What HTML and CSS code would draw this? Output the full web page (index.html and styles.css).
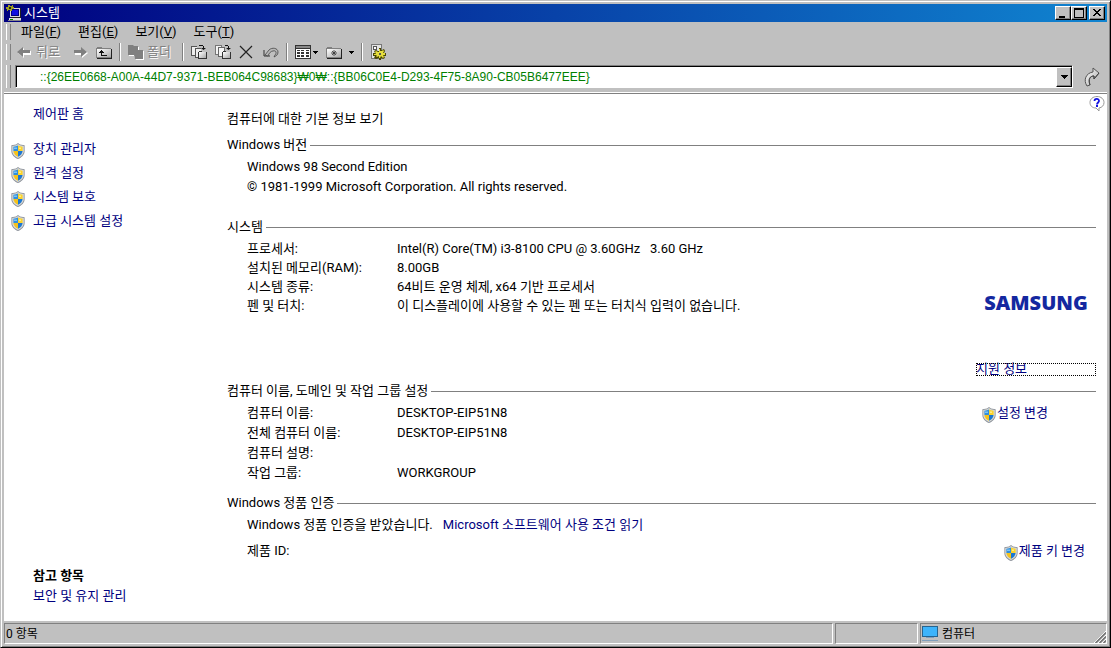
FILE: index.html
```html
<!DOCTYPE html>
<html lang="ko">
<head>
<meta charset="utf-8">
<title>시스템</title>
<link rel="stylesheet" href="styles.css">
</head>
<body>
<svg class="symbols" aria-hidden="true">
  <symbol id="shield" viewBox="0 0 14 16">
    <path d="M7 0 9 1.6 13.6 2.2V8C13.6 11.8 10.6 14.6 7 16 3.4 14.6.4 11.8.4 8V2.2L5 1.6Z" fill="#8a9099"/>
    <path d="M7 1 9 2.3 12.8 3V8C12.8 11.2 10.2 13.8 7 15 3.8 13.8 1.2 11.2 1.2 8V3L5 2.3Z" fill="#d8d9d6"/>
    <path d="M7 2.4V8H2.4V3.8L5 3.3Z" fill="#2f8fe0"/>
    <path d="M7 2.4V8H11.6V3.8L9 3.3Z" fill="#fbd32c"/>
    <path d="M7 8V13.8C4.5 12.7 2.6 10.6 2.4 8Z" fill="#f5c21c"/>
    <path d="M7 8V13.8C9.5 12.7 11.4 10.6 11.6 8Z" fill="#1b77d2"/>
    <path d="M3 4.5H6V6H3Z" fill="#7cc4f5"/><path d="M8 4.5H10V6H8Z" fill="#ffec85"/>
  </symbol>
  <linearGradient id="metal" x1="0" y1="0" x2="1" y2="1"><stop offset="0" stop-color="#fff"/><stop offset="1" stop-color="#a8a8a8"/></linearGradient>
</svg>
<div class="window">
  <header class="titlebar">
    <svg class="icon" viewBox="0 0 16 16" aria-hidden="true">
      <path d="M4 3h10v9H4z" fill="#d8d8d8"/><path d="M5 4h8v7H5z" fill="#000080"/><path d="M6 5h6v5H6z" fill="#1010e0"/>
      <path d="M5 12h9v1H5zM14 3h1v10h-1z" fill="#202020"/><path d="M3 13h12v2H3z" fill="#e0e0e0"/><path d="M2 15h13v1H2z" fill="#888"/><path d="M4 14h3v1H4z" fill="#008000"/>
      <path d="M2 0h2v1h2V0h1v2h1v2H6v2H4V5H2v1H1V4H0V2h2z" fill="#a0a020"/><path d="M3 2h2v2H3z" fill="#222"/>
    </svg>
    <h1>시스템</h1>
    <div class="controls">
      <button type="button" aria-label="최소화"><svg viewBox="0 0 12 10"><path d="M2 8h6v2H2z"/></svg></button>
      <button type="button" aria-label="최대화"><svg viewBox="0 0 12 10"><path fill-rule="evenodd" d="M1 0h10v10H1zM2 2v7h8V2z"/></svg></button>
      <button type="button" class="close" aria-label="닫기"><svg viewBox="0 0 12 10"><path d="M2 1h2v1h1v1h2V2h1V1h2v1H9v1H8v1H7v1h1v1h1v1h1v1H8V7H7V6H5v1H4v1H2V7h1V6h1V5h1V4H4V3H3V2H2z"/></svg></button>
    </div>
  </header>

  <nav class="bar menubar">
    <button type="button">파일(<u>F</u>)</button>
    <button type="button">편집(<u>E</u>)</button>
    <button type="button">보기(<u>V</u>)</button>
    <button type="button">도구(<u>T</u>)</button>
  </nav>

  <div class="bar toolbar">
    <button type="button" class="wide" disabled>
      <svg class="icon" viewBox="0 0 16 16"><path d="M1 9l6-5v3h7v4H7v3z" fill="#fff"/><path d="M0 8l6-5v3h7v3H6v4z" fill="#808080"/></svg><span>뒤로</span>
    </button>
    <button type="button" aria-label="앞으로" disabled>
      <svg class="icon" viewBox="0 0 16 16"><path d="M16 9l-6-5v3H3v4h7v3z" fill="#fff"/><path d="M15 8L9 3v3H2v3h7v4z" fill="#808080"/></svg>
    </button>
    <button type="button" aria-label="위로">
      <svg class="icon" viewBox="0 0 16 16"><path d="M0 4h1V3h5v1h9v10H0z" fill="#808080"/><path d="M1 5h14v8H1z" fill="url(#metal)"/><path d="M15 5h1v10H1v-1h14z" fill="#202020"/><path d="M5 6h1v1h1v1h1v1H6v2h5v1H5V9H3V8h1V7h1z" fill="#111"/></svg>
    </button>
    <span class="sep"></span>
    <button type="button" class="wide" disabled>
      <svg class="icon" viewBox="0 0 16 16"><path d="M1 2h5l1 1h4v4h5v9H8l-2-4H1z" fill="#fff"/><path d="M0 1h5l1 1h4v4h5v9H7l-1-4H0z" fill="#808080"/></svg><span>폴더</span>
    </button>
    <span class="sep"></span>
    <button type="button" aria-label="이동">
      <svg class="icon" viewBox="0 0 16 16"><path d="M0 2h6v10H0z" fill="#555"/><path d="M1 3h5v8H1z" fill="#eee"/><path d="M4 4h6v10H4z" fill="#555"/><path d="M5 5h5v8H5z" fill="#eee"/><path d="M7 8h1V7h3v1h5v7H7z" fill="#333"/><path d="M8 8h7v6H8z" fill="url(#metal)"/><path d="M8 1h4v1h1v2h2L12.500 6 10 4h2V2H8z" fill="#111"/></svg>
    </button>
    <button type="button" aria-label="복사">
      <svg class="icon" viewBox="0 0 16 16"><path d="M0 1h7v10H0z" fill="#777"/><path d="M1 2h5v8H1z" fill="#f4f4f4"/><path d="M3 3h7v10H3z" fill="#666"/><path d="M4 4h5v8H4z" fill="#f4f4f4"/><path d="M7 8h1V7h3v1h5v7H7z" fill="#333"/><path d="M8 8h7v6H8z" fill="url(#metal)"/><path d="M10 1h3v1h1v2h2L13.500 6 11 4h2V2h-3z" fill="#111"/></svg>
    </button>
    <button type="button" aria-label="삭제">
      <svg class="icon" viewBox="0 0 16 16"><path d="M1 2l12 12M13 2L1 14" stroke="#222" stroke-width="1.200"/></svg>
    </button>
    <button type="button" aria-label="실행 취소">
      <svg class="icon" viewBox="0 0 16 16"><path d="M1 6v6h6" fill="none" stroke="#333"/><path d="M2 11l4-5c3-3 9-2 9 2 0 3-2 4-4 5l1-2c2-2 1-5-2-4-2 0-4 2-5 5z" fill="#b8b8b8" stroke="#444" stroke-width=".8"/></svg>
    </button>
    <span class="sep"></span>
    <button type="button" class="drop" aria-label="보기 방식">
      <svg class="icon" viewBox="0 0 16 16"><path d="M0 1h16v14H0z" fill="#333"/><path d="M1 2h14v2H1z" fill="#888"/><path d="M1 5h14v9H1z" fill="#fff"/><path d="M2 6h3v1H2zM6 6h3v1H6zM11 6h3v1h-3zM2 8h3v2H2zM6 8h3v2H6zM11 8h3v2h-3zM2 11h3v2H2zM6 11h3v2H6zM11 11h3v2h-3z" fill="#333"/></svg><svg class="caret" viewBox="0 0 5 3"><path d="M0 0h5v1H4v1H3v1H2V2H1V1H0z"/></svg>
    </button>
    <button type="button" class="drop split" aria-label="폴더 옵션">
      <svg class="icon" viewBox="0 0 16 16"><path d="M0 4h1V3h5v1h9v10H0z" fill="#808080"/><path d="M1 5h14v8H1z" fill="url(#metal)"/><path d="M15 5h1v10H1v-1h14z" fill="#202020"/><path d="M8 6v6M5 9h6M6 7l4 4M10 7l-4 4" stroke="#333" stroke-width=".8"/></svg><svg class="caret" viewBox="0 0 5 3"><path d="M0 0h5v1H4v1H3v1H2V2H1V1H0z"/></svg>
    </button>
    <span class="sep"></span>
    <button type="button" aria-label="설정">
      <svg class="icon" viewBox="0 0 16 16"><path d="M1 0h11v15H1z" fill="#777"/><path d="M2 1h9v13H2z" fill="#e4e4e4"/><path d="M3 2h4v4H3z" fill="#555"/><path d="M4 3h2v2H4z" fill="#fff"/><path d="M9 4h2v2h1l2-1 1 2-1 2h2v3h-2l1 2-2 1-2-1v2H9v-2l-3 1-2-1 1-2H3V9h2L4 7l2-1 2 1h1z" fill="#4a4800"/><path d="M9 5h1v2h2l1-1 1 1-1 2h2v2h-2l1 2-1 1-2-2-1 2H9v-2l-2 1-1-1 1-1H4v-1h2L5 8l1-1 2 1h1z" fill="#e6de3c"/><path d="M9 9h2v2H9z" fill="#555"/></svg>
    </button>
  </div>

  <form class="bar addressbar">
    <div class="address">
      <input type="text" aria-label="주소" value="::{26EE0668-A00A-44D7-9371-BEB064C98683}₩0₩::{BB06C0E4-D293-4F75-8A90-CB05B6477EEE}">
      <button type="button" aria-label="주소 목록"><svg viewBox="0 0 7 4"><path d="M0 0h7v1H6v1H5v1H4v1H3V3H2V2H1V1H0z"/></svg></button>
    </div>
    <button type="submit" class="go" aria-label="이동">
      <svg viewBox="0 0 18 20"><path d="M4 19C0 13 3 6 10 5V1l6 5-5 6V9C7 9 5 12 7 18Z" fill="url(#metal)" stroke="#555"/><path d="M16 6l-5 6V9C7 9 5 12 7 18" fill="none" stroke="#444"/></svg>
    </button>
  </form>

  <div class="content">
    <aside class="sidebar">
      <a href="#home" class="home">제어판 홈</a>
      <ul>
        <li><a href="#device"><svg class="shield" aria-hidden="true"><use href="#shield"/></svg>장치 관리자</a></li>
        <li><a href="#remote"><svg class="shield" aria-hidden="true"><use href="#shield"/></svg>원격 설정</a></li>
        <li><a href="#protect"><svg class="shield" aria-hidden="true"><use href="#shield"/></svg>시스템 보호</a></li>
        <li><a href="#advanced"><svg class="shield" aria-hidden="true"><use href="#shield"/></svg>고급 시스템 설정</a></li>
      </ul>
      <div class="seealso">
        <h3>참고 항목</h3>
        <a href="#security">보안 및 유지 관리</a>
      </div>
    </aside>

    <main>
      <p class="lead">컴퓨터에 대한 기본 정보 보기</p>

      <section class="edition">
        <h2>Windows 버전</h2>
        <p>Windows 98 Second Edition</p>
        <p>© 1981-1999 Microsoft Corporation. All rights reserved.</p>
      </section>

      <section class="system">
        <h2>시스템</h2>
        <div class="columns">
          <dl>
            <dt>프로세서:</dt><dd>Intel(R) Core(TM) i3-8100 CPU @ 3.60GHz &nbsp; 3.60 GHz</dd>
            <dt>설치된 메모리(RAM):</dt><dd>8.00GB</dd>
            <dt>시스템 종류:</dt><dd>64비트 운영 체제, x64 기반 프로세서</dd>
            <dt>펜 및 터치:</dt><dd>이 디스플레이에 사용할 수 있는 펜 또는 터치식 입력이 없습니다.</dd>
          </dl>
          <div class="maker">
            <span class="logo">SAMSUNG</span>
            <a href="#support" class="support">지원 정보</a>
          </div>
        </div>
      </section>

      <section class="names">
        <h2>컴퓨터 이름, 도메인 및 작업 그룹 설정</h2>
        <div class="columns">
          <dl>
            <dt>컴퓨터 이름:</dt><dd>DESKTOP-EIP51N8</dd>
            <dt>전체 컴퓨터 이름:</dt><dd>DESKTOP-EIP51N8</dd>
            <dt>컴퓨터 설명:</dt><dd></dd>
            <dt>작업 그룹:</dt><dd>WORKGROUP</dd>
          </dl>
          <a href="#change" class="action change"><svg class="shield" aria-hidden="true"><use href="#shield"/></svg>설정 변경</a>
        </div>
      </section>

      <section class="activation">
        <h2>Windows 정품 인증</h2>
        <p>Windows 정품 인증을 받았습니다.<a href="#license" class="license">Microsoft 소프트웨어 사용 조건 읽기</a></p>
        <div class="product"><span>제품 ID:</span>
          <a href="#key" class="action"><svg class="shield" aria-hidden="true"><use href="#shield"/></svg>제품 키 변경</a>
        </div>
      </section>

      <button type="button" class="help" aria-label="도움말">
        <svg viewBox="0 0 16 16"><path d="M8 .5c4 0 7 2.500 7 6 0 3-2 5-5 5.500V15l-3-3C3 12 1 9.500 1 6.500 1 3 4 .5 8 .5Z" fill="#fff" stroke="#999"/><path d="M5.500 5C5.500 2.500 10 2 10 5 10 6.500 8 6.500 8 8.500M7 10h2" fill="none" stroke="#1414e0" stroke-width="1.800"/></svg>
      </button>
    </main>
  </div>

  <footer class="statusbar">
    <span class="panel items">0 항목</span>
    <span class="panel blank"></span>
    <span class="panel zone">
      <svg viewBox="0 0 16 15" aria-hidden="true"><path d="M0 0h16v11H0z" fill="#27648f"/><path d="M1 1h14v9H1z" fill="#3db4fb"/><path d="M4 11h8v1H4zM0 14h16v1H0z" fill="#7f9fbd"/></svg>컴퓨터
      <svg class="grip" viewBox="0 0 12 12" aria-hidden="true"><path d="M0 12L12 0M4 12l8-8M8 12l4-4" stroke="#fff"/><path d="M1.500 12L12 1.500M5.500 12L12 5.500M9.500 12L12 9.500" stroke="#707070" stroke-width="1.400"/></svg>
    </span>
  </footer>
</div>
</body>
</html>
```
FILE: styles.css
```css
* { box-sizing: border-box; }
html, body { height: 100%; }
body {
  margin: 0;
  background: #c0c0c0;
  color: #000;
  font: 13px/20px Roboto, "Noto Sans CJK KR", sans-serif;
}
h1, h2, h3, p, ul, dl, dd { margin: 0; padding: 0; font-size: 13px; font-weight: 400; }
ul { list-style: none; }
a { color: #000080; text-decoration: none; white-space: nowrap; }
button { margin: 0; padding: 0; border: 0; background: none; font: inherit; color: inherit; }
svg { display: block; flex: none; }
.symbols { position: absolute; width: 0; height: 0; }
.icon { width: 16px; height: 16px; }
.shield { width: 14px; height: 16px; }

.window {
  display: flex;
  flex-direction: column;
  min-height: 100%;
  padding: 2px 3px 2px 2px;
  border: 1px solid #c0c0c0;
  border-right-color: #000;
  border-bottom-color: #000;
  box-shadow: inset 1px 1px #fff, inset -1px -1px #808080;
}

.titlebar {
  display: flex;
  align-items: center;
  height: 18px;
  margin: 1px 0 0 1px;
  padding: 0 2px;
  gap: 2px;
  color: #fff;
  background: linear-gradient(to right, #000080, #1084d0);
}
.titlebar h1 { flex: 1; line-height: 18px; }
.controls { display: flex; }
.controls button, .address button {
  display: flex;
  align-items: center;
  justify-content: center;
  width: 16px;
  height: 14px;
  background: #c0c0c0;
  border: 1px solid;
  border-color: #fff #000 #000 #fff;
  box-shadow: inset -1px -1px #808080;
}
.controls svg { width: 12px; height: 10px; }
.controls .close { margin-left: 2px; }

.bar { position: relative; display: flex; align-items: center; }
.bar::before {
  content: "";
  position: absolute;
  left: 3px;
  top: 2px;
  bottom: 2px;
  width: 3px;
  background: #c0c0c0;
  border-left: 1px solid #fff;
  border-right: 1px solid #808080;
}
.menubar { height: 20px; padding-left: 18px; gap: 17px; }
.toolbar { height: 20px; padding-left: 10px; }
.toolbar button { display: flex; align-items: center; gap: 3px; padding: 0 4px; white-space: nowrap; }
.toolbar button:disabled { color: #808080; text-shadow: 1px 1px #fff; }
.toolbar .wide { margin-right: 4px; }
.toolbar .drop { gap: 2px; padding-right: 4px; }
.toolbar .split { gap: 7px; }
.caret { width: 5px; height: 3px; }
.sep { width: 2px; height: 18px; margin: 0 3px; border-left: 1px solid #808080; border-right: 1px solid #fff; }

.addressbar { height: 31px; padding: 3px 6px 5px 12px; gap: 10px; }
.addressbar::before { top: 3px; bottom: 5px; }
.address {
  flex: 1;
  display: flex;
  height: 23px;
  background: #fff;
  border: 1px solid;
  border-color: #808080 #fff #fff #808080;
  box-shadow: inset 1px 1px #000;
  padding: 1px 0 0 1px;
}
.address input {
  flex: 1;
  min-width: 0;
  padding: 0 0 0 23px;
  border: 0;
  outline: 0;
  background: none;
  color: #008000;
  font: 12px/20px "Liberation Sans", "Noto Sans CJK KR", sans-serif;
}
.address button { height: 20px; }
.address button svg { width: 7px; height: 4px; }
.go svg { width: 18px; height: 20px; }

.content {
  flex: 1;
  display: flex;
  margin-left: 1px;
  background: #fff;
  border-top: 1px solid #808080;
  box-shadow: 0 -1px #fff;
}
.sidebar { display: flex; flex-direction: column; width: 223px; padding: 10px 0 15px 7px; }
.sidebar .home, .seealso { padding-left: 22px; }
.sidebar ul { margin-top: 13px; }
.sidebar li a { display: flex; gap: 8px; height: 24px; line-height: 24px; }
.sidebar .shield { margin-top: 6px; }
.seealso { margin-top: auto; }
.seealso h3 { font-weight: 700; }

main { position: relative; flex: 1; min-width: 0; padding: 15px 11px 20px 0; }
h2 { display: flex; align-items: center; gap: 3px; margin-bottom: 2px; white-space: nowrap; }
h2::after { content: ""; flex: 1; height: 1px; background: #808080; }
section > p, section > .columns, section > .product { padding-left: 20px; }
.edition { margin-top: 6px; }
.system { margin-top: 20px; }
.names { margin-top: 5px; }
.activation { margin-top: 10px; }
.columns { display: flex; justify-content: space-between; }
dl { display: grid; grid-template-columns: 150px auto; grid-auto-rows: 20px; white-space: nowrap; }
.system dl { grid-auto-rows: 19px; }
.maker { display: flex; flex-direction: column; width: 120px; padding-top: 54px; }
.logo {
  align-self: center;
  color: #1428a0;
  font: 800 20px/20px "Open Sans", sans-serif;
}
.support {
  height: 13px;
  margin-top: 50px;
  line-height: 11px;
  outline: 1px dotted #000;
  outline-offset: -1px;
}
.action { display: flex; gap: 1px; }
.action .shield { margin-top: 4px; }
.change { margin-right: 48px; }
.license { margin-left: 10px; }
.product { display: flex; justify-content: space-between; margin-top: 6px; padding-right: 11px; }
.help { position: absolute; right: 2px; top: 2px; }
.help svg { width: 16px; height: 16px; }

.statusbar { display: flex; gap: 2px; height: 24px; margin-left: 1px; padding: 2px 0 1px; font-size: 12px; }
.panel {
  display: flex;
  align-items: center;
  border: 1px solid;
  border-color: #808080 #fff #fff #808080;
}
.items { flex: 1; padding-left: 1px; }
.blank { width: 83px; }
.zone { position: relative; width: 187px; padding-left: 1px; gap: 4px; }
.zone svg { width: 16px; height: 15px; }
.zone .grip { position: absolute; right: 0; bottom: 0; width: 12px; height: 12px; }
```
